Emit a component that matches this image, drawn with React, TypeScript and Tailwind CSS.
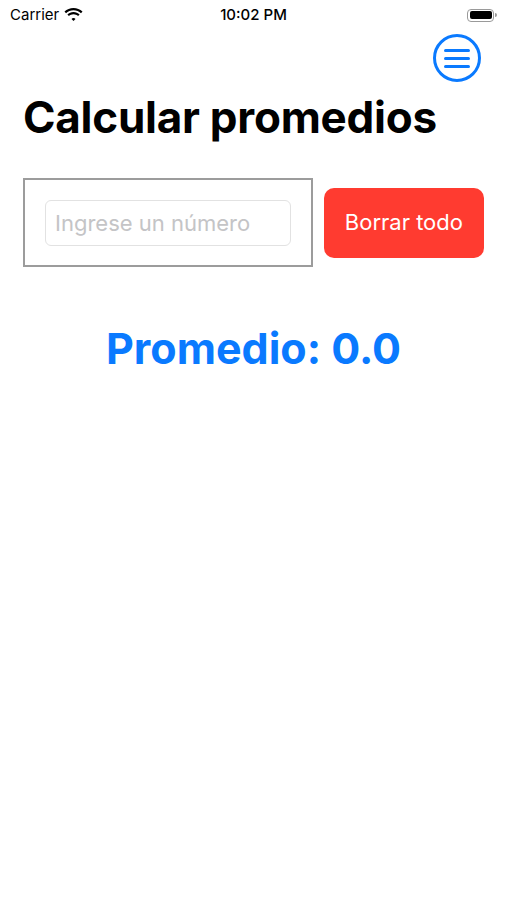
import React, { useState } from 'react';

const FONT = { fontFamily: 'Inter, "Liberation Sans", sans-serif' };

function StatusBar() {
  return (
    <div className="relative flex h-[30px] items-center justify-between px-[10px] text-[15px] text-black">
      <div className="flex items-center gap-[5px]">
        <span className="font-normal">Carrier</span>
        <svg width="19" height="14" viewBox="0 0 19 14" aria-hidden>
          <path d="M9.5 2.2c2.9 0 5.5 1.1 7.5 3l1.5-1.6C16.1 1.4 12.9 0 9.5 0S2.9 1.4.5 3.6L2 5.2c2-1.9 4.6-3 7.5-3z" fill="#000" />
          <path d="M9.5 6.2c1.8 0 3.4.7 4.6 1.8l1.5-1.6C14 4.9 11.9 4 9.5 4S5 4.9 3.4 6.4L4.9 8c1.2-1.1 2.8-1.8 4.6-1.8z" fill="#000" />
          <path d="M9.5 10.1c.8 0 1.5.3 2 .8L9.5 13l-2-2.1c.5-.5 1.2-.8 2-.8z" fill="#000" />
        </svg>
      </div>
      <span className="absolute left-1/2 -translate-x-1/2 font-medium">10:02 PM</span>
      <div className="flex items-center">
        <div className="h-[13px] w-[27px] rounded-[4px] border border-[#9a9a9a] p-[1.5px]">
          <div className="h-full w-full rounded-[2px] bg-black" />
        </div>
        <div className="ml-[1px] h-[4px] w-[2px] rounded-r-sm bg-[#9a9a9a]" />
      </div>
    </div>
  );
}

export default function App() {
  const [value, setValue] = useState('');

  return (
    <div className="min-h-[900px] w-[507px] bg-white" style={FONT}>
      <StatusBar />

      {/* Menu button */}
      <div className="flex justify-end pr-[26px] pt-[4px]">
        <button
          aria-label="Menu"
          className="flex h-[48px] w-[48px] flex-col items-center justify-center gap-[5px] rounded-full border-[3px] border-[#0a7aff]"
        >
          <span className="h-[3px] w-[26px] rounded-full bg-[#0a7aff]" />
          <span className="h-[3px] w-[26px] rounded-full bg-[#0a7aff]" />
          <span className="h-[3px] w-[26px] rounded-full bg-[#0a7aff]" />
        </button>
      </div>

      <h1 className="ml-[23px] mt-[9px] text-[44px] font-bold leading-[52px] tracking-[-0.25px] text-black">
        Calcular promedios
      </h1>

      {/* Input row */}
      <div className="mt-[35px] flex items-center px-[23px]">
        <div className="flex h-[89px] w-[291px] items-center border-2 border-[#9c9c9c] px-[20px]">
          <input
            type="text"
            value={value}
            onChange={(e) => setValue(e.target.value)}
            placeholder="Ingrese un número"
            className="h-[46px] w-full rounded-[6px] border border-[#e2e2e2] px-[9px] text-[22px] text-black placeholder-[#c4c4c6] outline-none"
          />
        </div>
        <button
          onClick={() => setValue('')}
          className="ml-[11px] flex h-[70px] w-[161px] items-center justify-center rounded-[10px] bg-[#ff3b30] text-[22px] text-white"
        >
          Borrar todo
        </button>
      </div>

      <p className="mt-[56px] text-center text-[43px] font-bold leading-[50px] text-[#0a7aff]">
        Promedio: 0.0
      </p>
    </div>
  );
}
